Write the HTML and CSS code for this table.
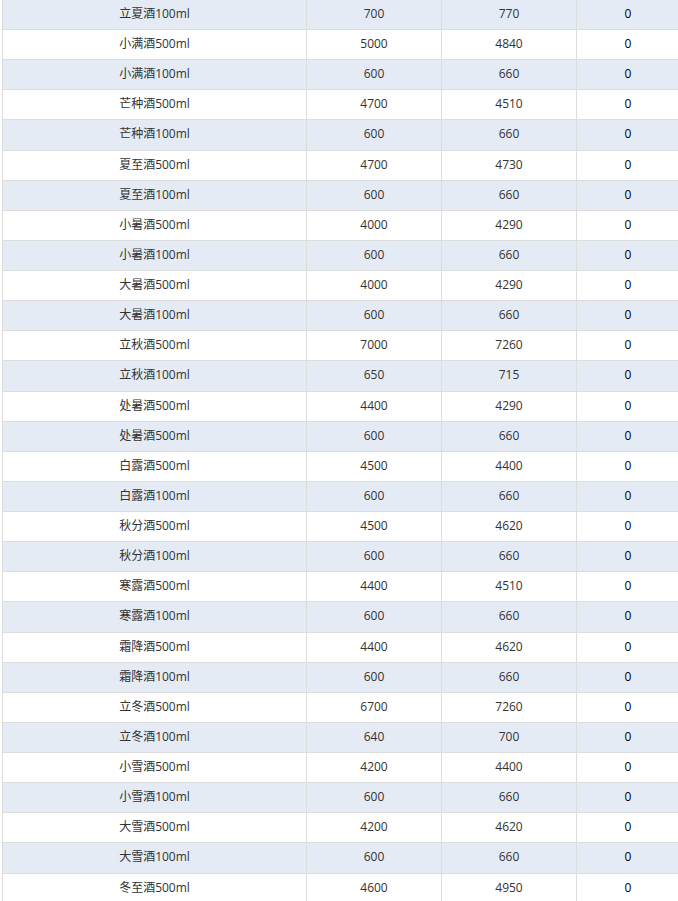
FILE: index.html
```html
<!DOCTYPE html>
<html lang="zh">
<head>
<meta charset="utf-8">
<link rel="stylesheet" href="styles.css">
</head>
<body>
<div class="wrap">
<table class="grid">
<colgroup><col class="c1"><col class="c2"><col class="c3"><col class="c4"></colgroup>
<tbody>
<tr><td>立夏酒100ml</td><td>700</td><td>770</td><td class="q">0</td></tr>
<tr><td>小满酒500ml</td><td>5000</td><td>4840</td><td class="q">0</td></tr>
<tr><td>小满酒100ml</td><td>600</td><td>660</td><td class="q">0</td></tr>
<tr><td>芒种酒500ml</td><td>4700</td><td>4510</td><td class="q">0</td></tr>
<tr><td>芒种酒100ml</td><td>600</td><td>660</td><td class="q">0</td></tr>
<tr><td>夏至酒500ml</td><td>4700</td><td>4730</td><td class="q">0</td></tr>
<tr><td>夏至酒100ml</td><td>600</td><td>660</td><td class="q">0</td></tr>
<tr><td>小暑酒500ml</td><td>4000</td><td>4290</td><td class="q">0</td></tr>
<tr><td>小暑酒100ml</td><td>600</td><td>660</td><td class="q">0</td></tr>
<tr><td>大暑酒500ml</td><td>4000</td><td>4290</td><td class="q">0</td></tr>
<tr><td>大暑酒100ml</td><td>600</td><td>660</td><td class="q">0</td></tr>
<tr><td>立秋酒500ml</td><td>7000</td><td>7260</td><td class="q">0</td></tr>
<tr><td>立秋酒100ml</td><td>650</td><td>715</td><td class="q">0</td></tr>
<tr><td>处暑酒500ml</td><td>4400</td><td>4290</td><td class="q">0</td></tr>
<tr><td>处暑酒500ml</td><td>600</td><td>660</td><td class="q">0</td></tr>
<tr><td>白露酒500ml</td><td>4500</td><td>4400</td><td class="q">0</td></tr>
<tr><td>白露酒100ml</td><td>600</td><td>660</td><td class="q">0</td></tr>
<tr><td>秋分酒500ml</td><td>4500</td><td>4620</td><td class="q">0</td></tr>
<tr><td>秋分酒100ml</td><td>600</td><td>660</td><td class="q">0</td></tr>
<tr><td>寒露酒500ml</td><td>4400</td><td>4510</td><td class="q">0</td></tr>
<tr><td>寒露酒100ml</td><td>600</td><td>660</td><td class="q">0</td></tr>
<tr><td>霜降酒500ml</td><td>4400</td><td>4620</td><td class="q">0</td></tr>
<tr><td>霜降酒100ml</td><td>600</td><td>660</td><td class="q">0</td></tr>
<tr><td>立冬酒500ml</td><td>6700</td><td>7260</td><td class="q">0</td></tr>
<tr><td>立冬酒100ml</td><td>640</td><td>700</td><td class="q">0</td></tr>
<tr><td>小雪酒500ml</td><td>4200</td><td>4400</td><td class="q">0</td></tr>
<tr><td>小雪酒100ml</td><td>600</td><td>660</td><td class="q">0</td></tr>
<tr><td>大雪酒500ml</td><td>4200</td><td>4620</td><td class="q">0</td></tr>
<tr><td>大雪酒100ml</td><td>600</td><td>660</td><td class="q">0</td></tr>
<tr><td>冬至酒500ml</td><td>4600</td><td>4950</td><td class="q">0</td></tr>
</tbody>
</table>
</div>
</body>
</html>
```
FILE: styles.css
```css
html, body {
  margin: 0;
  padding: 0;
  background: #ffffff;
  overflow: hidden;
}
.wrap {
  padding-left: 2px;
  height: 901px;
  overflow: hidden;
}
.grid {
  margin-top: -1.14px;
  border-collapse: collapse;
  table-layout: fixed;
  width: 677px;
  font-family: "Open Sans", "Noto Sans CJK SC", sans-serif;
  font-size: 12px;
  color: #333333;
}
.c1 { width: 304px; }
.c2 { width: 135px; }
.c3 { width: 135px; }
.c4 { width: 103px; }
.grid tr {
  height: 30.14px;
}
.grid tr:nth-child(odd) {
  background: #e5ebf5;
}
.grid td {
  border: 1px solid #dddddd;
  padding: 0 4px 1px;
  text-align: center;
  vertical-align: middle;
  line-height: 16px;
  white-space: nowrap;
}
.grid td.q {
  color: #000000;
}
```
